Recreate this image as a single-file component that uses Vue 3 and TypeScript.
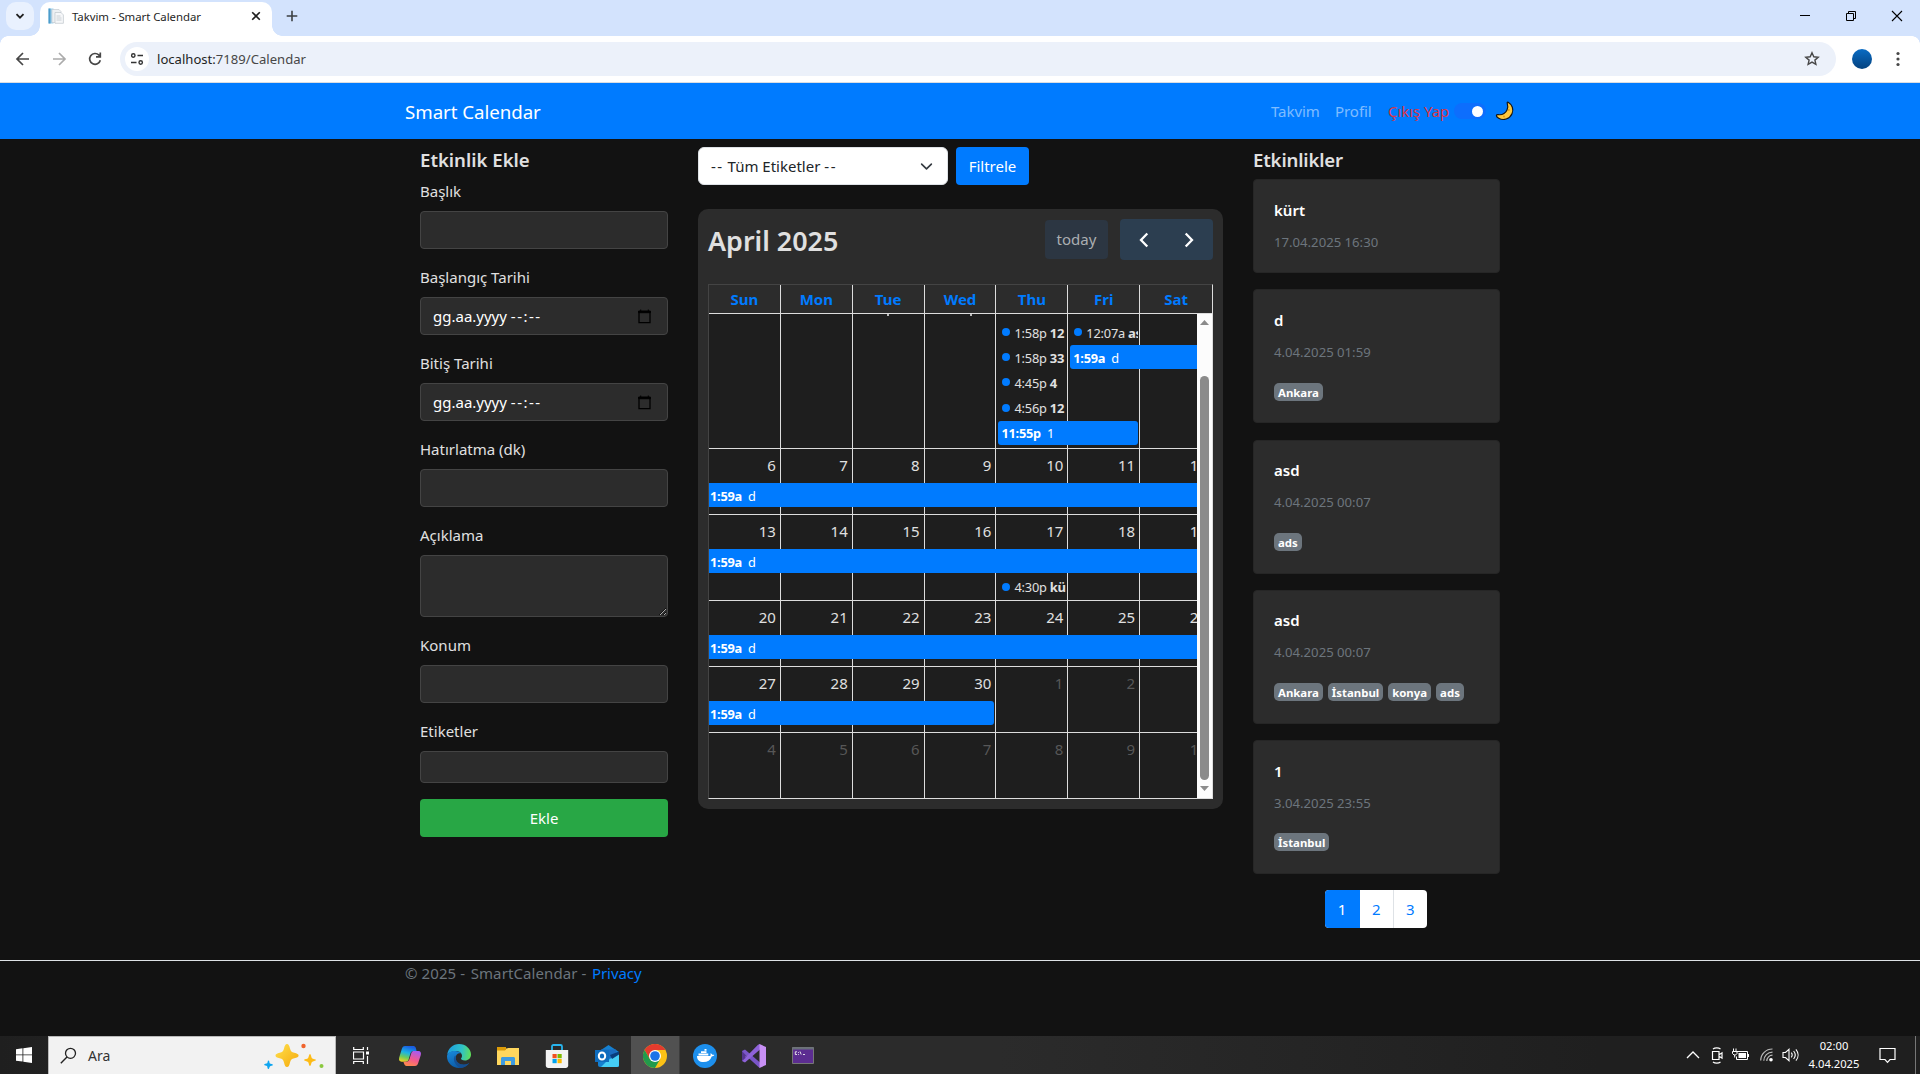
<script setup lang="ts">
interface Field { label: string; kind: 'text' | 'date' | 'area' | 'tags' }
interface CalEvent { time: string; title: string; col: number; span: number; track: number; dot?: boolean; open?: boolean; start?: boolean }
interface Week { size: string; days: string[]; mutedFrom: number; events: CalEvent[] }
interface Item { title: string; date: string; tags: string[] }

const fields: Field[] = [
  { label: 'Başlık', kind: 'text' },
  { label: 'Başlangıç Tarihi', kind: 'date' },
  { label: 'Bitiş Tarihi', kind: 'date' },
  { label: 'Hatırlatma (dk)', kind: 'text' },
  { label: 'Açıklama', kind: 'area' },
  { label: 'Konum', kind: 'text' },
  { label: 'Etiketler', kind: 'tags' },
]

const dayNames: string[] = ['Sun', 'Mon', 'Tue', 'Wed', 'Thu', 'Fri', 'Sat']

const fullWeek = (): CalEvent => ({ time: '1:59a', title: 'd', col: 1, span: 7, track: 2, open: true })

const weeks: Week[] = [
  {
    size: 'first', days: ['', '', '', '', '', '', ''], mutedFrom: 7,
    events: [
      { time: '1:58p', title: '12', col: 5, span: 1, track: 2, dot: true },
      { time: '1:58p', title: '33', col: 5, span: 1, track: 3, dot: true },
      { time: '4:45p', title: '4', col: 5, span: 1, track: 4, dot: true },
      { time: '4:56p', title: '12', col: 5, span: 1, track: 5, dot: true },
      { time: '12:07a', title: 'asd', col: 6, span: 1, track: 2, dot: true },
      { time: '1:59a', title: 'd', col: 6, span: 2, track: 3, start: true, open: true },
      { time: '11:55p', title: '1', col: 5, span: 2, track: 6, start: true },
    ],
  },
  { size: 'short', days: ['6', '7', '8', '9', '10', '11', '12'], mutedFrom: 7, events: [fullWeek()] },
  {
    size: 'tall', days: ['13', '14', '15', '16', '17', '18', '19'], mutedFrom: 7,
    events: [fullWeek(), { time: '4:30p', title: 'kürt', col: 5, span: 1, track: 3, dot: true }],
  },
  { size: 'short', days: ['20', '21', '22', '23', '24', '25', '26'], mutedFrom: 7, events: [fullWeek()] },
  {
    size: 'short', days: ['27', '28', '29', '30', '1', '2', '3'], mutedFrom: 4,
    events: [{ time: '1:59a', title: 'd', col: 1, span: 4, track: 2 }],
  },
  { size: 'short', days: ['4', '5', '6', '7', '8', '9', '10'], mutedFrom: 0, events: [] },
]

const items: Item[] = [
  { title: 'kürt', date: '17.04.2025 16:30', tags: [] },
  { title: 'd', date: '4.04.2025 01:59', tags: ['Ankara'] },
  { title: 'asd', date: '4.04.2025 00:07', tags: ['ads'] },
  { title: 'asd', date: '4.04.2025 00:07', tags: ['Ankara', 'İstanbul', 'konya', 'ads'] },
  { title: '1', date: '3.04.2025 23:55', tags: ['İstanbul'] },
]
</script>

<template>
  <div class="screen">
    <header class="tabstrip">
      <div class="tab-search">
        <svg width="10" height="10" viewBox="0 0 10 10"><path d="M1.5 3.2 5 6.7l3.5-3.5" fill="none" stroke="#1f1f1f" stroke-width="1.8" /></svg>
      </div>
      <div class="tab">
        <svg class="favicon" width="16" height="16" viewBox="0 0 16 16">
          <path d="M.5.5h5v15h-5z" fill="#9fd0ec" /><path d="M.5.5h2v15h-2z" fill="#4c9ccb" />
          <path d="M4 1.5h7l2 2v11H4z" fill="#edf0f3" stroke="#c5cbd2" stroke-width=".7" />
          <path d="M7 4.5h6l2.4 2.4v8.4H7z" fill="#f6f7f9" stroke="#bfc5cc" stroke-width=".7" />
          <path d="M8.5 8h4M8.5 10h5M8.5 12h5" stroke="#c4c9cf" stroke-width=".9" />
        </svg>
        <span class="tab-title">Takvim - Smart Calendar</span>
        <svg class="tab-close" width="10" height="10" viewBox="0 0 10 10"><path d="m1.2 1.2 7.6 7.6m0-7.6L1.2 8.8" stroke="#1f1f1f" stroke-width="1.6" /></svg>
      </div>
      <svg class="tab-add" width="12" height="12" viewBox="0 0 12 12"><path d="M6 .7v10.6M.7 6h10.6" stroke="#3c4043" stroke-width="1.6" /></svg>
      <div class="window-buttons">
        <svg width="12" height="12" viewBox="0 0 12 12"><path d="M1 5.5h10" stroke="#000" /></svg>
        <svg width="12" height="12" viewBox="0 0 12 12"><path d="M1.5 3.5h7v7h-7zM3.5 3.5v-2h7v7h-2" fill="none" stroke="#000" /></svg>
        <svg width="12" height="12" viewBox="0 0 12 12"><path d="m1 1 10 10M11 1 1 11" stroke="#000" stroke-width="1.1" /></svg>
      </div>
    </header>

    <div class="toolbar">
      <div class="nav-icons">
        <svg width="16" height="16" viewBox="0 0 16 16"><path d="M14 8H2.6M8 2 2 8l6 6" fill="none" stroke="#474747" stroke-width="1.7" /></svg>
        <svg width="16" height="16" viewBox="0 0 16 16"><path d="M2 8h11.4M8 2l6 6-6 6" fill="none" stroke="#ababab" stroke-width="1.7" /></svg>
        <svg width="16" height="16" viewBox="0 0 16 16"><path d="M13.3 9.2A5.4 5.4 0 1 1 12 4.2l1.2 1.4M13.3 1.6v4.3H9" fill="none" stroke="#474747" stroke-width="1.7" /></svg>
      </div>
      <div class="omnibox">
        <div class="site-info">
          <svg width="14" height="14" viewBox="0 0 14 14"><path d="M7.5 3.5H13M1 10.5h5.5" stroke="#333" stroke-width="1.5" /><circle cx="3.3" cy="3.5" r="1.7" fill="none" stroke="#333" stroke-width="1.4" /><circle cx="10.7" cy="10.5" r="1.7" fill="none" stroke="#333" stroke-width="1.4" /></svg>
        </div>
        <span class="url"><b>localhost:</b>7189/Calendar</span>
        <svg class="star" width="16" height="16" viewBox="0 0 16 16"><path d="m8 1.800 1.800 4 4.400.4-3.300 2.900 1 4.300L8 11.100l-3.900 2.300 1-4.300-3.300-2.900 4.400-.4z" fill="none" stroke="#474747" stroke-width="1.400" /></svg>
      </div>
      <div class="avatar"></div>
      <svg width="4" height="16" viewBox="0 0 4 16"><circle cx="2" cy="2.500" r="1.600" fill="#474747" /><circle cx="2" cy="8" r="1.600" fill="#474747" /><circle cx="2" cy="13.500" r="1.600" fill="#474747" /></svg>
    </div>

    <nav class="navbar">
      <span class="brand">Smart Calendar</span>
      <span class="link takvim">Takvim</span>
      <span class="link profil">Profil</span>
      <span class="link logout">Çıkış Yap</span>
      <span class="switch"><i></i></span>
      <svg class="moon" width="20" height="20" viewBox="0 0 20 20"><path d="M13.200 1.200c4 2.400 5.800 7.300 3.800 11.500-2.400 5.400-8.700 7.300-13.300 4.500-1.500-.9-2.400-1.900-2.300-2.700.1-.7.800-.9 1.800-.8 3.800.4 7.200-1.300 8.800-4.700 1-2.200 1-4.300.3-6.400-.3-1 .1-1.800.9-1.400z" fill="#ffc83d" stroke="#151515" stroke-width="1.200" /><circle cx="13.900" cy="9" r=".9" fill="#e39d1b" /><circle cx="9" cy="15.500" r="1" fill="#e39d1b" /></svg>
    </nav>

    <main class="columns">
      <section class="form">
        <h5>Etkinlik Ekle</h5>
        <div v-for="f in fields" :key="f.label" class="field">
          <label>{{ f.label }}</label>
          <textarea v-if="f.kind === 'area'" class="control area"></textarea>
          <div v-else class="control" :class="f.kind">
            <template v-if="f.kind === 'date'">
              <span>gg.aa.yyyy <span class="dash">--:--</span></span>
              <svg width="13" height="15" viewBox="0 0 13 15"><path d="M.6 2h11.800v1.700H.6zM2.700.5v2M10.300.5v2" fill="#000" stroke="#000" /><path d="M1 3v10.700h11V3" fill="none" stroke="#000" stroke-width="1.300" /></svg>
            </template>
          </div>
        </div>
        <button class="submit">Ekle</button>
      </section>

      <section class="center">
        <div class="filter">
          <div class="select"><span><span class="dash">--</span> Tüm Etiketler <span class="dash">--</span></span>
            <svg width="13" height="13" viewBox="0 0 16 16"><path d="m2 5 6 6 6-6" fill="none" stroke="#343a40" stroke-width="2" stroke-linecap="round" stroke-linejoin="round" /></svg>
          </div>
          <button class="filter-btn">Filtrele</button>
        </div>
        <div class="calendar">
          <div class="cal-toolbar">
            <h2>April 2025</h2>
            <button class="today">today</button>
            <div class="pager">
              <svg width="12" height="18" viewBox="0 0 12 18"><path d="M9.300 2.500 3 9l6.300 6.500" fill="none" stroke="#fff" stroke-width="2.300" /></svg>
              <svg width="12" height="18" viewBox="0 0 12 18"><path d="M2.700 2.500 9 9l-6.300 6.500" fill="none" stroke="#fff" stroke-width="2.300" /></svg>
            </div>
          </div>
          <div class="grid">
            <div class="grid-head"><span v-for="d in dayNames" :key="d">{{ d }}</span></div>
            <div class="grid-body">
              <div class="weeks">
                <div v-for="(w, wi) in weeks" :key="wi" class="week" :class="w.size">
                  <div v-for="(d, di) in w.days" :key="di" class="day" :class="{ muted: di >= w.mutedFrom }" :style="{ gridColumn: di + 1 }">
                    {{ d }}<i v-if="wi === 0 && (di === 2 || di === 3)" class="tail" :class="{ wed: di === 3 }"></i>
                  </div>
                  <div v-for="(e, ei) in w.events" :key="'e' + ei" class="event" :class="{ dot: e.dot, bar: !e.dot, open: e.open, begins: e.start }"
                    :style="{ gridColumn: `${e.col} / span ${e.span}`, gridRow: e.track }">
                    <i v-if="e.dot"></i><span class="time">{{ e.time }}</span><span class="title">{{ e.title }}</span>
                  </div>
                </div>
              </div>
              <div class="scrollbar">
                <svg width="9" height="5" viewBox="0 0 9 5"><path d="M4.500 0 9 5H0z" fill="#8b8b8b" /></svg>
                <div class="thumb"></div>
                <svg width="9" height="5" viewBox="0 0 9 5"><path d="M0 0h9L4.500 5z" fill="#8b8b8b" /></svg>
              </div>
            </div>
          </div>
        </div>
      </section>

      <section class="list">
        <h5>Etkinlikler</h5>
        <article v-for="(it, i) in items" :key="i" class="card" :class="{ plain: !it.tags.length }">
          <h6>{{ it.title }}</h6>
          <p>{{ it.date }}</p>
          <div v-if="it.tags.length" class="tags"><span v-for="t in it.tags" :key="t" class="badge">{{ t }}</span></div>
        </article>
        <div class="pages"><span class="active">1</span><span>2</span><span>3</span></div>
      </section>
    </main>

    <footer class="footer"><span>© 2025 <span class="dash">-</span> SmartCalendar <span class="dash">-</span> <a>Privacy</a></span></footer>

    <div class="taskbar">
      <div class="start-button">
        <svg width="16" height="16" viewBox="0 0 16 16"><path d="M0 2.300 6.500 1.300v6.200H0zM7.300 1.200 16 0v7.500H7.300zM0 8.300h6.500v6.300L0 13.700zM7.300 8.300H16V16l-8.700-1.200z" fill="#fff" /></svg>
      </div>
      <div class="search">
        <svg width="17" height="17" viewBox="0 0 17 17"><circle cx="10.500" cy="6.300" r="5" fill="none" stroke="#222" stroke-width="1.300" /><path d="M7 10 .8 16.200" stroke="#222" stroke-width="1.400" /></svg>
        <span>Ara</span>
        <svg class="sparkles" width="62" height="26" viewBox="0 0 62 26">
          <defs><linearGradient id="gold" x1="0" y1="0" x2="1" y2="1"><stop offset="0" stop-color="#ffe14d" /><stop offset="1" stop-color="#f5a90c" /></linearGradient></defs>
          <path d="M24 1c1.600 0 2.300 1.500 3 4.500.7 2.800 1.600 3.500 4.300 4.200 2.700.8 4.300 1.300 4.300 2.800s-1.600 2-4.300 2.800c-2.700.7-3.600 1.400-4.300 4.200-.7 3-1.400 4.500-3 4.500s-2.300-1.500-3-4.500c-.7-2.800-1.600-3.500-4.300-4.200-2.700-.8-4.200-1.300-4.200-2.800s1.500-2 4.200-2.800C19.400 9 20.300 8.300 21 5.500c.7-3 1.400-4.500 3-4.500z" fill="url(#gold)" />
          <path d="M47 11c1 0 1.200 3.500 2 4.200.8.800 4 1 4 1.900s-3.200 1.100-4 1.900c-.8.700-1 4-2 4s-1.200-3.300-2-4c-.8-.8-4-1-4-1.900s3.200-1.100 4-1.900c.8-.7 1-4.200 2-4.200z" fill="#fdbb16" />
          <path d="M5.500 17.500c1.200.3.700 2.500 1.400 3.100.7.600 3.100.3 3 1.400-.2 1-2.400.8-3 1.400-.7.700-.6 2.800-1.700 2.600-1-.2-.6-2.300-1.200-3-.6-.6-2.900-.3-2.800-1.400.2-1.100 2.300-.7 3-1.400.6-.6.3-2.900 1.300-2.700z" fill="#0ea5f0" />
          <circle cx="40.500" cy="3" r="2.200" fill="#f0642d" /><circle cx="58.500" cy="23" r="2" fill="#8bc83f" />
        </svg>
      </div>
      <div class="apps">
        <div class="app"><svg width="17" height="17" viewBox="0 0 17 17"><path d="M.7 0v2.500h9.600V0M.5 5h10v7H.5zM.7 17v-2.500h9.600V17M14.500 0v3M14.500 9v8" fill="none" stroke="#fff" stroke-width="1.200" /><path d="M13 4.500h3v3h-3z" fill="#fff" /></svg></div>
        <div class="app"><svg width="24" height="24" viewBox="0 0 24 24">
          <defs><linearGradient id="cpa" x1=".5" y1="0" x2=".2" y2="1"><stop offset="0" stop-color="#1a5de0" /><stop offset=".4" stop-color="#1ab2e8" /><stop offset=".7" stop-color="#6dcb5c" /><stop offset="1" stop-color="#f5d220" /></linearGradient><linearGradient id="cpb" x1=".7" y1="0" x2=".3" y2="1"><stop offset="0" stop-color="#a95bf0" /><stop offset=".55" stop-color="#f4598e" /><stop offset="1" stop-color="#ff8a4c" /></linearGradient></defs>
          <path d="M7 2h8.500c1.300 0 2 1 2.400 2.200L18.600 7h-3c-1.800 0-2.700 1-3.200 2.600L10.500 16c-.5 1.200-1.300 1.700-2.600 1.700H3.700C1.300 17.700.6 16 1.200 13.600L3.800 5C4.400 3 5.300 2 7 2z" fill="url(#cpa)" />
          <path d="M17 22H8.500c-1.300 0-2-1-2.400-2.200L5.400 17.700h3c1.700 0 2.600-1 3.100-2.600L13.400 8.700c.5-1.200 1.300-1.700 2.600-1.700h4.300c2.400 0 3.100 1.700 2.500 4L20.200 19c-.6 2-1.500 3-3.200 3z" fill="url(#cpb)" /></svg></div>
        <div class="app"><svg width="24" height="24" viewBox="0 0 24 24">
          <defs><linearGradient id="eda" x1="0" y1=".4" x2="1" y2=".5"><stop offset="0" stop-color="#1c9de0" /><stop offset=".6" stop-color="#2fc2c8" /><stop offset="1" stop-color="#5fe05a" /></linearGradient><linearGradient id="edb" x1=".2" y1="0" x2=".6" y2="1"><stop offset="0" stop-color="#1787d8" /><stop offset="1" stop-color="#0c59a4" /></linearGradient></defs>
          <path d="M.3 10.500C1 4.300 6 0 12 0c6.800 0 12 4.900 12 10.400 0 3.700-2.800 6-6 6-3 0-4-1-4-1.700 0-.6 1-1 1-3 0-2.500-2.500-4.700-6-4.700-3.600 0-6.800 1.300-8.700 3.500z" fill="url(#eda)" />
          <path d="M0 12.500C.2 8.500 4 7 8 7c3 0 5 1 6 2.500-3-.8-5.300 1.500-5.300 4.500 0 4 3.700 6.700 7.800 6.700 2.500 0 4.800-1.200 5.800-1.800C20.300 22 16.500 24 12 24 5.200 24 0 18.700 0 12.500z" fill="url(#edb)" />
          <path d="M8 11.500c-2.500 3.500-.5 9.500 5 12.400 4.500-.2 7.600-2.500 9.300-5-3.700 2.300-8.800 2.200-11.600-.6C8.700 16.400 8.200 14 8.800 12z" fill="#164b8c" opacity=".8" /></svg></div>
        <div class="app"><svg width="24" height="24" viewBox="0 0 24 24"><path d="M1 3h8l2 2H1z" fill="#e0a010" /><path d="M1 5.500 10 5l2-1h11v17H1z" fill="#ffd75e" /><path d="M1 3h9v2.300L9 6.500H1z" fill="#dc9b08" /><path d="M5 21v-6.500C5 13.500 5.700 13 6.500 13h11c.8 0 1.500.5 1.500 1.500V21h-4v-4H9v4z" fill="#3f9be0" /></svg></div>
        <div class="app"><svg width="24" height="24" viewBox="0 0 24 24"><path d="M7 7V2.500C7 1.500 7.500 1 8.500 1h7c1 0 1.500.5 1.500 1.500V7" fill="none" stroke="#28b5ef" stroke-width="1.800" /><path d="M.8 6h22.400v15.500c0 1.500-1 2.500-2.500 2.500H3.300C1.800 24 .8 23 .8 21.500z" fill="#f3f3f3" /><path d="M7.500 10h4.200v4.200H7.500z" fill="#f25022" /><path d="M12.500 10h4.200v4.200h-4.200z" fill="#7fba00" /><path d="M7.500 15h4.200v4.200H7.500z" fill="#00a4ef" /><path d="M12.500 15h4.200v4.200h-4.200z" fill="#ffb900" /></svg></div>
        <div class="app"><svg width="24" height="24" viewBox="0 0 24 24"><path d="M3 8 13.500 1 24 8v13.500c0 1-.8 1.500-1.700 1.500H5c-1.200 0-2-.8-2-2z" fill="#1580d0" /><path d="M6 5.500h15V14H6z" fill="#1b6cc0" /><path d="M24 9 12 17l-6 6h16c1.200 0 2-.8 2-2z" fill="#45cdf5" /><path d="m15 11 9-3.500v3L17 15z" fill="#0a3d7c" /><path d="M0 6h14v12H0z" fill="#0f6cbd" /><ellipse cx="7" cy="12" rx="3.200" ry="3.600" fill="none" stroke="#fff" stroke-width="2" /></svg></div>
        <div class="app active"><svg width="24" height="24" viewBox="0 0 24 24"><circle cx="12" cy="12" r="12" fill="#fbc116" /><path d="M1.600 6A12 12 0 0 1 22.400 6H12L6.800 15z" fill="#e33b2e" /><path d="M1.600 6a12 12 0 0 0 10.400 18l5.200-9L6.800 15z" fill="#229a4c" /><circle cx="12" cy="12" r="6" fill="#fff" /><circle cx="12" cy="12" r="4.800" fill="#1a73e8" /></svg></div>
        <div class="app"><svg width="24" height="24" viewBox="0 0 24 24"><circle cx="12" cy="12" r="12" fill="#1d8fec" /><path d="M4 12h13.200c.6-.6.5-1.800 0-2.500 1-.2 1.800.4 2.100 1.300.8-.2 1.500 0 2 .3-.5 1-1.500 1.300-2.600 1.300C17.500 16 14.600 18 10.500 18 6.500 18 4 16 4 12z" fill="#fff" /><path d="M5.500 9.500h9.800v1.900H5.500zM8 7.200h5.500v1.900H8zM11.500 5h2v1.800h-2z" fill="#fff" /></svg></div>
        <div class="app"><svg width="24" height="24" viewBox="0 0 24 24"><path d="m0 7 3-1.500 15 13V24L16.500 23 0 8z" fill="#7a55c7" /><path d="M0 7v10l3 1.500L18 5.500V0L16 .8 4.500 12.500 3 11z" fill="#8e62d8" /><path d="M0 7 3.500 11v3L0 17z" fill="#54358f" /><path d="m17.500 0 6.500 3v18l-6.500 3z" fill="#c890f5" /></svg></div>
        <div class="app"><svg width="22" height="17" viewBox="0 0 22 17"><path d="M.5.5h21v16H.5z" fill="#5c2d91" stroke="#777" /><path d="M.5.5h21v2H.5z" fill="#68707a" /><path d="M5 4.800H3.300v2.700H5M6.500 5.200v.8M6.500 7v.8M8 4.500l1.200 3M11 7.500h2" fill="none" stroke="#eee" stroke-width=".9" /></svg></div>
      </div>
      <div class="tray">
        <svg class="t1" width="14" height="8" viewBox="0 0 14 8"><path d="m1 7 6-6 6 6" fill="none" stroke="#fff" stroke-width="1.300" /></svg>
        <svg class="t2" width="12" height="17" viewBox="0 0 12 17"><path d="M2 2c2-1.600 5.500-1.600 7.500 0M2 15c2 1.600 5.500 1.600 7.500 0M1.500 4.500h6.500v8H1.500zM8.500 7.500 11 5.800v5.400L8.500 9.500" fill="none" stroke="#fff" stroke-width="1.200" /></svg>
        <svg class="t3" width="17" height="14" viewBox="0 0 17 14"><path d="M5 3.500h10.500v8H4.500v-3" fill="none" stroke="#fff" /><path d="M6.500 5h7.500v5H6.500zM15.800 6H17v3h-1.200z" fill="#fff" /><path d="M1.500.5v3M4 .5v3M.5 3.500h4.500v2L3.500 7h-1.500L.5 5.500zM2.700 7v2.500" fill="none" stroke="#fff" /></svg>
        <svg class="t4" width="13" height="14" viewBox="0 0 13 14"><g fill="none" stroke="#bbb" stroke-width="1.200"><path d="M.7 12.500C.7 6 6 1 12.500 1M3.800 12.800c0-4.900 3.900-8.700 8.700-8.700M6.800 13c0-3.300 2.600-5.800 5.700-5.800" /></g><circle cx="11" cy="11.700" r="1.800" fill="#fff" /></svg>
        <svg class="t5" width="17" height="14" viewBox="0 0 17 14"><path d="M1 4.500h2.500L7 1.300v11.400L3.500 9.500H1zM9.300 4.700c1 1.300 1 3.300 0 4.600M11.600 3c2 2.400 2 5.600 0 8M13.900 1.300c2.900 3.400 2.900 8 0 11.400" fill="none" stroke="#fff" stroke-width="1.100" /></svg>
        <div class="clock"><span>02:00</span><span>4.04.2025</span></div>
        <svg class="t6" width="17" height="17" viewBox="0 0 17 17"><path d="M1 1.500h15v11h-5L8.500 15.300 6 12.500H1z" fill="none" stroke="#fff" stroke-width="1.200" /></svg>
        <div class="desk"></div>
      </div>
    </div>
  </div>
</template>

<style>
body { margin: 0; background: #121212; overflow: hidden; }
</style>

<style scoped>
* { box-sizing: border-box; }
.screen { width: 1920px; height: 1074px; display: flex; flex-direction: column; background: #121212; color: #e0e0e0; font: 15px/24px "Noto Sans", "Open Sans", sans-serif; white-space: nowrap; overflow: hidden; }
svg { display: block; flex: none; }
h2, h5, h6, p { margin: 0; }
button { font: inherit; border: 0; padding: 0; }
.dash { letter-spacing: 1.5px; }

.tabstrip { height: 36px; flex: none; background: #d3e3fd; display: flex; align-items: flex-start; padding: 2px 17px 0 6px; color: #1f1f1f; }
.tab-search { width: 28px; height: 28px; border-radius: 10px; background: #e9f1fe; display: flex; align-items: center; justify-content: center; }
.tab { position: relative; width: 232px; height: 34px; margin-left: 6px; background: #fff; border-radius: 10px 10px 0 0; display: flex; align-items: center; padding: 0 11px 6px 8px; }
.tab::before, .tab::after { content: ""; position: absolute; bottom: 0; width: 10px; height: 10px; }
.tab::before { left: -10px; background: radial-gradient(circle at 0 0, transparent 9.5px, #fff 10px); }
.tab::after { right: -10px; background: radial-gradient(circle at 100% 0, transparent 9.5px, #fff 10px); }
.tab-title { font-size: 11.4px; margin-left: 8px; padding-top: 1px; letter-spacing: -0.05px; }
.tab-close { margin-left: auto; }
.tab-add { margin: 8px 0 0 14px; }
.window-buttons { margin: 8px 0 0 auto; display: flex; gap: 34px; }

.toolbar { height: 47px; flex: none; background: #fff; border-bottom: 1px solid #d9dde3; display: flex; align-items: center; padding: 0 20px 0 15px; border-radius: 8px 8px 0 0; box-shadow: 0 -8px 0 0 #d3e3fd; clip-path: inset(0); }
.toolbar { background: radial-gradient(circle at 8px 8px, #fff 7.5px, #d3e3fd 8px) 0 0 / 8px 8px no-repeat, radial-gradient(circle at 0 8px, #fff 7.5px, #d3e3fd 8px) 100% 0 / 8px 8px no-repeat, #fff; border-radius: 0; box-shadow: none; }
.nav-icons { display: flex; gap: 20px; width: 105px; flex: none; }
.omnibox { flex: 1; height: 34px; border-radius: 17px; background: #ecf1fa; display: flex; align-items: center; padding: 0 16px 0 5px; }
.site-info { width: 24px; height: 24px; border-radius: 50%; background: #fff; display: flex; align-items: center; justify-content: center; }
.url { margin-left: 8px; font-size: 13.1px; color: #474747; }
.url b { font-weight: 400; color: #1f1f1f; }
.star { margin-left: auto; }
.avatar { width: 20px; height: 20px; border-radius: 50%; background: linear-gradient(#0a6cc4, #04427f); margin: 0 24px 0 16px; }

.navbar { height: 56px; flex: none; background: #007bff; display: flex; align-items: center; padding: 0 405px; }
.brand { font-size: 18.7px; letter-spacing: -0.05px; color: #fff; width: 866px; flex: none; padding-top: 1px; }
.link { color: rgba(255, 255, 255, .5); margin-right: 16px; flex: none; letter-spacing: -0.05px; }
.takvim { width: 48px; } .profil { width: 37px; }
.link.logout { color: #dc3545; width: 62px; margin-right: 4px; }
.switch { width: 32px; height: 16px; border-radius: 8px; background: #0d6efd; display: flex; flex: none; align-items: center; justify-content: flex-end; padding-right: 3px; }
.switch i { width: 11px; height: 11px; border-radius: 50%; background: #fff; }
.moon { margin-left: 9px; }

.columns { height: 821px; flex: none; padding: 8px 420px 0; display: grid; grid-template-columns: 248px 525px 247px; gap: 30px; }
h5 { font-size: 18.6px; line-height: 24px; font-weight: 600; height: 32px; padding-top: 1px; }
.form { display: flex; flex-direction: column; }
.field { display: flex; flex-direction: column; gap: 8px; margin-bottom: 16px; }
.control { height: 38px; background: #2c2c2c; border: 1px solid #444; border-radius: 4px; display: flex; align-items: center; justify-content: space-between; padding: 0 16px 0 12px; color: #fff; }
.area { height: 62px; margin: 0; display: block; }
.tags.control { height: 32px; }
.submit { height: 38px; border-radius: 4px; background: #28a745; color: #fff; }

.filter { display: flex; gap: 8px; margin-bottom: 24px; }
.select { width: 250px; height: 38px; border: 1px solid #dee2e6; border-radius: 6px; background: #fff; color: #212529; display: flex; align-items: center; justify-content: space-between; padding: 0 14px 0 12px; }
.filter-btn { width: 73px; height: 38px; border-radius: 4px; background: #007bff; color: #fff; }
.calendar { height: 600px; border-radius: 10px; background: #2c2c2c; padding: 10px; }
.cal-toolbar { height: 65px; display: flex; }
h2 { font-size: 26.9px; line-height: 44px; font-weight: 600; width: 337px; }
.today { width: 63px; height: 39px; margin-top: 1px; padding-bottom: 2px; border-radius: 4px; background: #2c3642; color: #abaeb1; }
.pager { width: 93px; height: 41px; margin-left: 12px; border-radius: 4px; background: #2c3e50; display: flex; align-items: center; justify-content: space-between; padding: 0 18px; }
.grid { border: 1px solid #444; border-right-color: #ddd; border-bottom-color: #ddd; width: 505px; height: 515px; }
.grid-head { display: grid; grid-template-columns: repeat(7, 71.86px); height: 29px; border-bottom: 1px solid #ddd; text-align: center; font-weight: 700; color: #007bff; line-height: 29px; }
.grid-head span { border-right: 1px solid #ddd; }
.grid-head span:last-child { border: 0; }
.grid-body { height: 484px; display: flex; background: #1e1e1e; }
.weeks { width: 488px; overflow: hidden; }
.week { display: grid; grid-template-columns: repeat(7, 71.86px); grid-template-rows: 34px 25.5px 1fr; height: 66px; border-bottom: 1px solid #ddd; }
.week.first { height: 135px; grid-template-rows: 6px repeat(5, 25.2px) 1fr; }
.week.tall { height: 86px; grid-template-rows: 34px 25.5px 25.5px; }
.week:last-child { border: 0; }
.day { position: relative; grid-row: 1 / -1; border-right: 1px solid #ddd; text-align: right; padding: 4px 4px 0 0; }
.muted { color: #575757; }
.tail { position: absolute; top: 0; left: 34px; width: 2px; height: 2px; background: #bbb; }
.tail.wed { left: 45px; }
.event { z-index: 1; display: flex; align-items: center; overflow: hidden; font-size: 12.8px; line-height: 24px; min-width: 0; }
.bar { height: 24px; background: #007bff; color: #fff; padding: 1px 0 0 1px; margin-right: 2px; border-radius: 0 3px 3px 0; }
.bar.begins { margin-left: 2px; border-radius: 3px; padding-left: 3px; }
.bar.open { margin-right: 0; }
.bar .time { font-weight: 700; margin-right: 6px; letter-spacing: -0.25px; }
.dot { margin: 0 2px; padding-left: 4px; }
.dot i { width: 8px; height: 8px; border-radius: 50%; background: #007bff; flex: none; margin: -1px 4px 0 0; }
.dot .time { letter-spacing: -0.2px; margin-right: 3px; }
.dot .title { font-weight: 700; font-size: 13px; letter-spacing: -0.2px; }
.scrollbar { width: 15px; background: #fcfcfc; display: flex; flex-direction: column; align-items: center; padding-top: 6px; }
.thumb { width: 9px; height: 404px; border-radius: 5px; background: #8b8b8b; margin: 51px 0 6px; }

.list { display: flex; flex-direction: column; }
.list h5 { letter-spacing: -0.15px; }
.card { height: 134px; margin-bottom: 16.25px; flex: none; background: #2c2c2c; border: 1px solid #262626; border-radius: 4px; padding: 17.6px 20px 0; }
.card.plain { height: 94px; }
h6 { font-size: 15px; line-height: 24px; font-weight: 600; color: #fff; margin-bottom: 8px; }
.card p { font-size: 13.15px; line-height: 24px; color: #6c757d; }
.tags:not(.control) { display: flex; gap: 5px; margin-top: 18.7px; }
.badge { height: 18px; border-radius: 5px; background: #6c757d; color: #fff; font-size: 11.4px; font-weight: 700; line-height: 19px; padding: 0 4px; }
.pages { display: flex; align-self: center; height: 38px; border-radius: 4px; overflow: hidden; background: #fff; color: #007bff; line-height: 38px; text-align: center; margin-right: 2px; }
.pages span { width: 33.5px; }
.pages span:last-child { border-left: 1px solid #dee2e6; }
.pages .active { width: 35px; background: #007bff; color: #fff; }

.footer { height: 76px; flex: none; border-top: 1px solid #dee2e6; color: #6c757d; padding-left: 405px; letter-spacing: 0.1px; }
.footer a { color: #007bff; letter-spacing: -0.05px; }

.taskbar { height: 38px; flex: none; background: linear-gradient(90deg, #1f1f1f, #2b2b2b 340px, #2b2b2b 1000px, #1f1f1f 1600px); display: flex; }
.start-button { width: 48px; display: flex; align-items: center; justify-content: center; }
.search { width: 288px; background: #f2f2f2; border: 1px solid #b9b9b9; border-bottom: 0; display: flex; align-items: center; color: #333; font-size: 14px; padding: 0 10px 0 11px; }
.search span { margin-left: 11px; }
.sparkles { margin-left: auto; }
.apps { display: flex; }
.app { width: 49.1px; padding: 1px 0 0 1px; display: flex; align-items: center; justify-content: center; }
.app.active { background: #515151; border-right: 1px solid #3c3c3c; }
.tray { margin-left: auto; display: flex; align-items: center; color: #fff; }
.t2 { margin-left: 11px; } .t3 { margin-left: 9px; } .t4 { margin-left: 11px; } .t5 { margin-left: 9px; } .t6 { margin-left: 20px; }
.clock { width: 50px; margin-left: 10px; display: flex; flex-direction: column; align-items: center; font-size: 11.2px; line-height: 18px; }
.desk { width: 5px; height: 38px; border-left: 1px solid #777; margin-left: 19px; }
</style>
